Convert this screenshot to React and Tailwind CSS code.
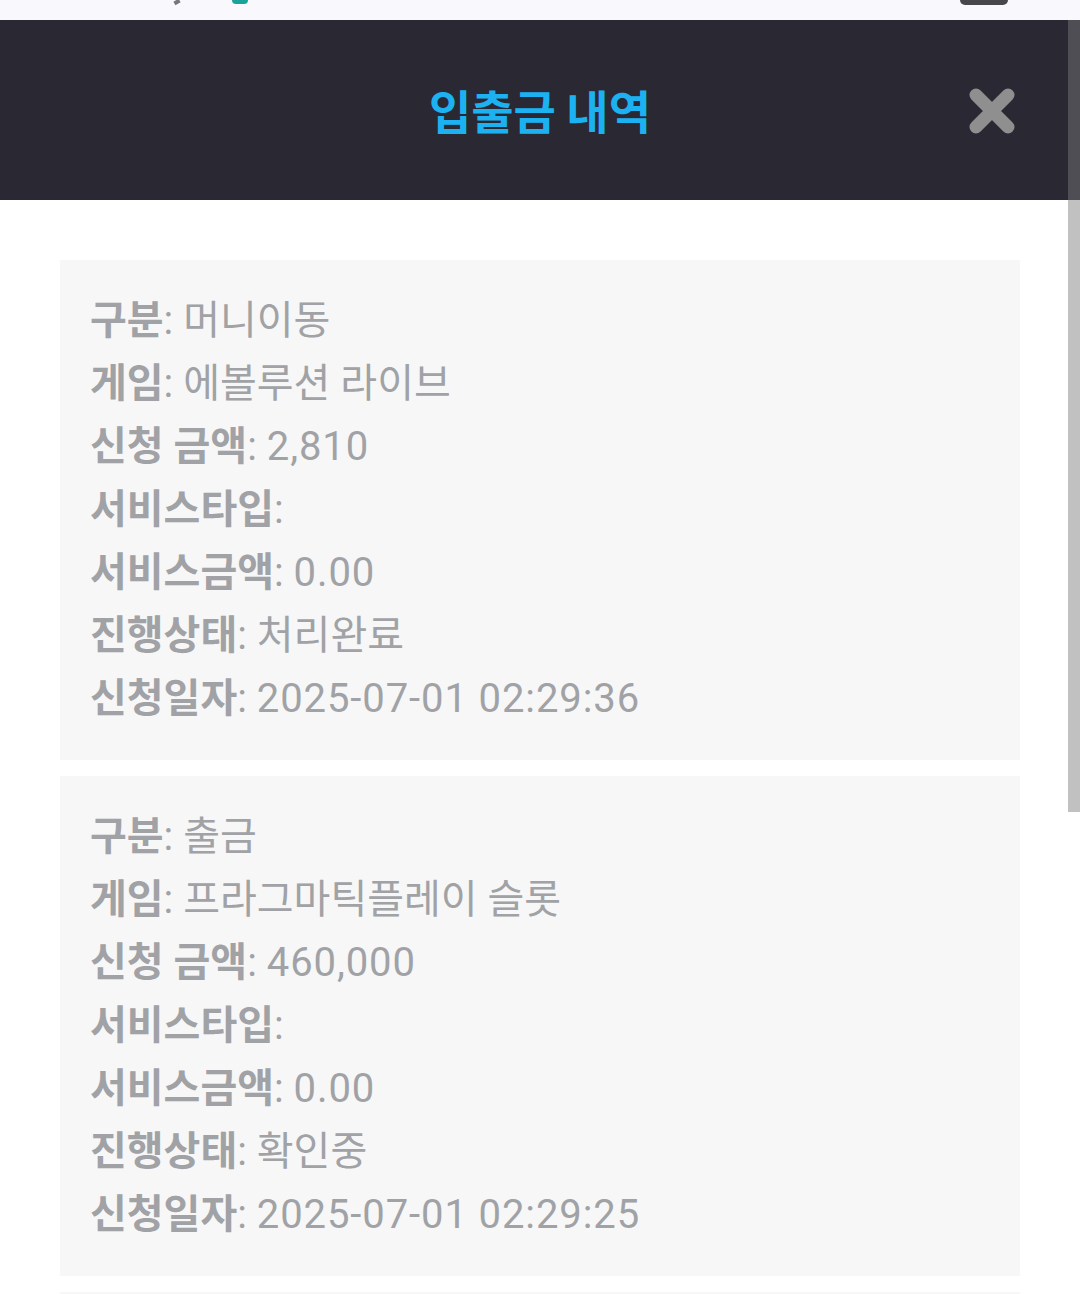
const records = [
  {
    type: "머니이동",
    game: "에볼루션 라이브",
    amount: "2,810",
    serviceType: "",
    serviceAmount: "0.00",
    status: "처리완료",
    date: "2025-07-01 02:29:36",
  },
  {
    type: "출금",
    game: "프라그마틱플레이 슬롯",
    amount: "460,000",
    serviceType: "",
    serviceAmount: "0.00",
    status: "확인중",
    date: "2025-07-01 02:29:25",
  },
];

const Row = ({ label, value, num }) => (
  <div className="h-[63px] flex items-center whitespace-pre">
    <span className="font-bold">{label}</span>
    <span>{": "}</span>
    <span className={num ? "tracking-[0.9px]" : ""}>{value}</span>
  </div>
);

const App = () => {
  return (
    <div
      className="w-[1080px] h-[1294px] overflow-hidden bg-white flex flex-col relative"
      style={{ fontFamily: '"Roboto", "Noto Sans CJK KR", sans-serif' }}
    >
      {/* page behind the modal */}
      <div className="h-[20px] shrink-0 bg-[#f8f8fd] flex">
        <div className="ml-[174px] w-[6px] h-[4px] bg-[#777] rotate-[-30deg]" />
        <div className="ml-[52px] w-[16px] h-[4px] rounded-b-full bg-[#1aa39a]" />
        <div className="ml-[712px] w-[48px] h-[5px] rounded-b-[12px] bg-[#48484c]" />
      </div>

      {/* header */}
      <div className="h-[180px] shrink-0 bg-[#2a2933] flex items-center justify-center relative">
        <h1
          className="text-[46px] font-bold text-[#1cb2f1] leading-none -mt-[2px]"
          style={{ fontFamily: '"Noto Sans CJK KR", sans-serif' }}
        >
          입출금 내역
        </h1>
        <button className="absolute left-[968px] top-[67px] w-[48px] h-[48px]">
          <svg viewBox="0 0 48 48" className="w-[48px] h-[48px]">
            <path
              d="M8 8 L40 40 M40 8 L8 40"
              stroke="#8f8f8f"
              strokeWidth="13"
              strokeLinecap="round"
            />
          </svg>
        </button>
      </div>

      {/* list */}
      <div className="px-[60px] pt-[60px] flex flex-col gap-[16px]">
        {records.map((r, i) => (
          <div
            key={i}
            className="bg-[#f7f7f7] px-[30px] pt-[29px] pb-[30px] text-[40px] text-[#a0a2a6] leading-none"
          >
            <Row label="구분" value={r.type} />
            <Row label="게임" value={r.game} />
            <Row label="신청 금액" value={r.amount} num />
            <Row label="서비스타입" value={r.serviceType} />
            <Row label="서비스금액" value={r.serviceAmount} num />
            <Row label="진행상태" value={r.status} />
            <Row label="신청일자" value={r.date} num />
          </div>
        ))}
        <div className="bg-[#f7f7f7] h-[500px] shrink-0" />
      </div>

      {/* scrollbar */}
      <div className="absolute right-0 top-[20px] w-[12px] flex flex-col">
        <div className="h-[180px] bg-[#4f4e55]" />
        <div className="h-[612px] bg-[#c1c1c1]" />
      </div>
    </div>
  );
};

export default App;
